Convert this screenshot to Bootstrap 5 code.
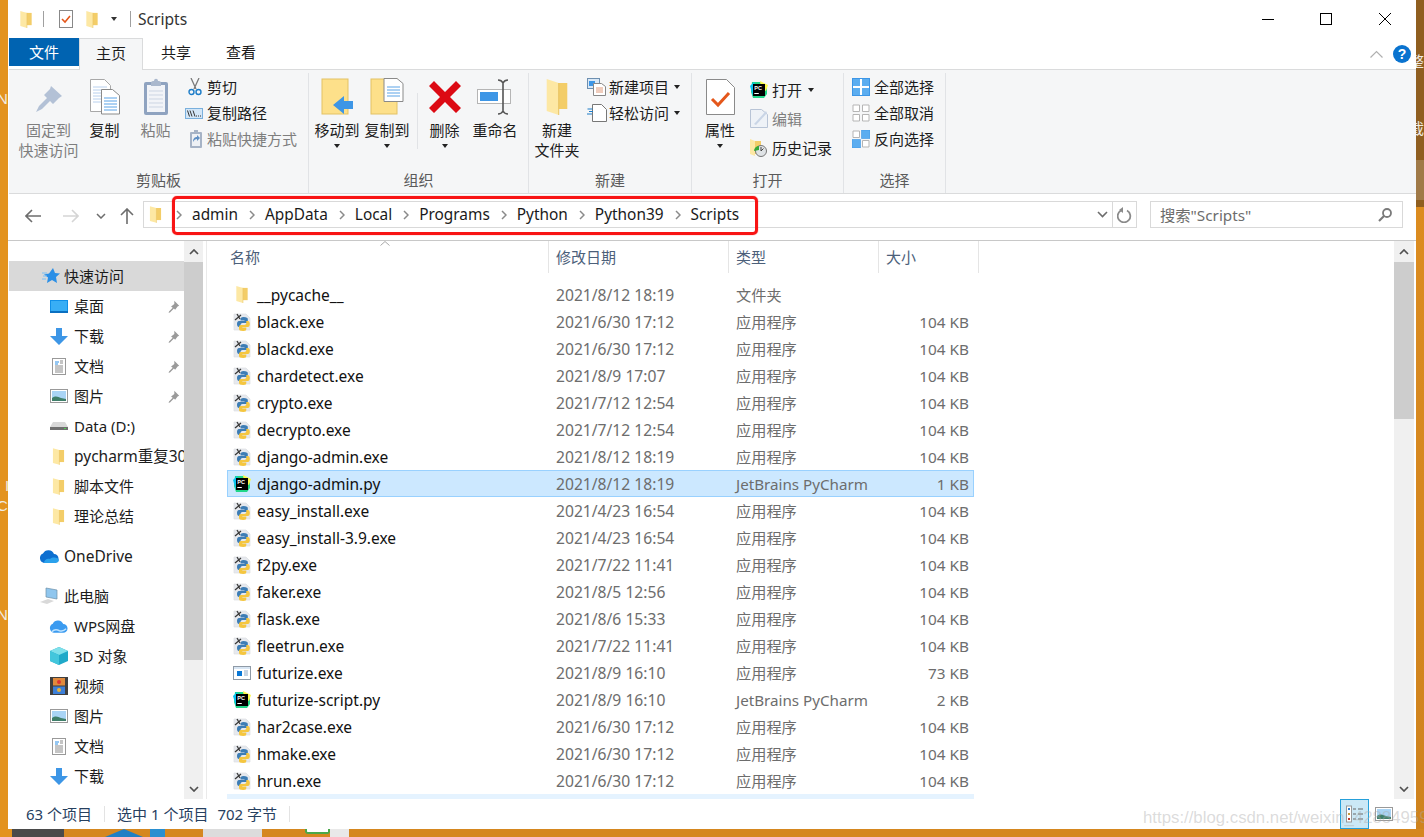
<!DOCTYPE html>
<html lang="zh-CN">
<head>
<meta charset="utf-8">
<title>Scripts</title>
<link rel="stylesheet" href="https://cdn.jsdelivr.net/npm/bootstrap@5.3.0/dist/css/bootstrap.min.css">
<style>
html,body{margin:0;height:837px;overflow:hidden}
body{width:1424px;background:#d5871f;font-family:"Noto Sans","Noto Sans CJK SC",sans-serif;font-size:15px;line-height:20px;color:#1c1c1c}
.ic{display:block;flex:none}
.desk-row{height:829px}
.strip-l{width:8px;background:#e3931f;position:relative;overflow:hidden}
.strip-r{width:8px;position:relative;overflow:hidden;background:linear-gradient(#8f5e20 0,#8f5e20 160px,#a07a48 160px,#a07a48 200px,#8f5e20 200px,#8f5e20 207px,#dc8c20 207px,#cf831e 829px)}
.ghost{position:absolute;color:#f0ece4;font-size:15px;line-height:15px;white-space:nowrap;font-family:"Liberation Sans","Noto Sans CJK SC",sans-serif}
.win{width:1408px;height:829px;background:#fff}
.titlebar{height:38px}
.tsep{width:1px;height:16px;background:#a0a0a0}
.wbtn{width:12px;height:12px}
.ttl{margin-left:7px;color:#333;font-size:15.6px}
.tabrow{height:31px;padding-left:1px}
.tab-file{width:70px;height:28px;background:#0063b1;color:#fff;font-size:15px}
.tab-x{height:31px;font-size:15px;text-align:center;line-height:29px}
.tab-home{width:64px;background:#f5f6f7;border:1px solid #dadbdc;border-bottom:0;margin-bottom:-1px;height:32px;position:relative;z-index:1}
.tab-a{width:66px}
.tab-b{width:64px}
.ribbon{height:125px;background:#f5f6f7;border-top:1px solid #dadbdc;border-bottom:1px solid #dadbdc;margin-left:1px}
.rg{height:120px;border-right:1px solid #e1e3e6;margin-top:3px}
.rg-body{height:97px}
.rg-lab{height:20px;color:#5a5a5a;text-align:center;line-height:20px}
.bigb{text-align:center;flex:none}
.bigi{height:47px}
.dim{color:#7e7e7e}
.caret-d{width:0;height:0;border-left:3.5px solid transparent;border-right:3.5px solid transparent;border-top:4px solid #222}
.smrow{height:26px;white-space:nowrap}
.smrow.tall{height:29px}
.addr{height:46px;padding-top:7px;padding-bottom:12px}
.navarrow{margin-top:3px}
.abox{height:27px;border:1px solid #d9d9d9}
.crumb{color:#1a1a1a;font-size:15.4px;margin-left:10px}
.cchev{margin-left:11px}
.search{height:27px;border:1px solid #d9d9d9;color:#6d6d6d;font-size:15.3px}
.redbox{position:absolute;left:172px;top:196px;width:586px;height:39px;border:3px solid #f81414;border-radius:5px;z-index:3;box-shadow:0 0 1px #f81414}
.body-a{height:559px;border-top:1px solid #c8c8c8}
.navp{width:175px;margin-left:1px;overflow:hidden;padding-top:20px}
.navi{height:30px;white-space:nowrap;overflow:hidden}
.navi.act{background:#d9d9d9}
.lat{font-size:15.5px}
.lv1{padding-left:33px}
.lv2{padding-left:41px}
.gap10{margin-top:10px}
.pin{margin-left:auto;margin-right:4px}
.sb{width:19px;background:#f0f0f0}
.sbb{height:21px}
.thumb{background:#cdcdcd}
.vsep{width:1px;background:#eaeaea;margin-left:3px;margin-right:3px}
.main{width:1184px;overflow:hidden}
.hdr{height:32px;color:#4c607a;margin-bottom:8px}
.hc{padding-left:7px;border-right:1px solid #e5e5e5;height:32px;line-height:32px;position:relative}
.sortc{position:absolute;left:170px;top:0}
.frow{height:27px;margin-left:17px;width:747px;border:1px solid transparent;flex:none;white-space:nowrap}
.frow.sel{background:#cce8ff;border-color:#99d1ff}
.frow.hov{background:#e5f3ff;border-color:#e5f3ff}
.c-n{width:328px;padding-left:5px;gap:6px;color:#111;font-size:15.5px}
.c-d{width:180px;color:#6d6d6d;font-size:15.65px}
.c-t{width:142px;color:#6d6d6d;font-size:15.2px}
.c-s{width:91px;color:#6d6d6d;text-align:right;font-size:15.3px}
.files{height:518px;overflow:hidden}
.status{height:30px;padding-left:18px;color:#27405f;position:relative}
.ssep{width:1px;height:16px;background:#e3e3e3}
.vbtn{width:29px;height:30px;background:#cbe8f6;border:1px solid #26a0da}
.wm{position:absolute;left:1143px;top:808px;z-index:4;color:rgba(170,170,170,.42);font-family:"Liberation Sans",sans-serif;font-size:16.8px;line-height:20px;white-space:nowrap;pointer-events:none}
.desk-b{height:8px}
.db{height:8px;flex:none}
.db-tri{background:#1f7fc4;clip-path:polygon(50% 0,100% 100%,0 100%)}
.db-grn{background:#fff;border:2px solid #4aa84a;border-top:0;border-radius:0 0 3px 3px;height:5px}
</style>
</head>
<body>
<svg width="0" height="0" class="position-absolute">
<defs>
<symbol id="folder" viewBox="0 0 14 18"><path d="M4 2h9v13H4z" fill="#f3cd68"/><path d="M1 0l7 2v16l-7-2z" fill="#fde8a4"/><path d="M8 2v16" stroke="#e9c463" stroke-width=".6"/></symbol>
<symbol id="py" viewBox="0 0 18 18"><path d="M1 1h12l4 4v12H1z" fill="#e6e9ee" stroke="#dcdfe3" stroke-width=".7"/><path d="M2 7L8 2M4 1l3 5" stroke="#3a3a3a" stroke-width="1.300" fill="none"/><g><path d="M10.500 4C8 4 7.500 5 7.500 6v1.500h4V8H6C4.500 8 4 9.500 4 11s.5 3 2 3h1.500v-2c0-1.200 1-2 2-2H13c1 0 1.800-.8 1.800-1.800V6c0-1-1-2-4.300-2z" fill="#3d7db5"/><path transform="rotate(180 10.400 11)" d="M10.500 4C8 4 7.500 5 7.500 6v1.500h4V8H6C4.500 8 4 9.500 4 11s.5 3 2 3h1.500v-2c0-1.200 1-2 2-2H13c1 0 1.800-.8 1.800-1.800V6c0-1-1-2-4.300-2z" fill="#f5c63f"/></g></symbol>
<symbol id="pc" viewBox="0 0 18 18"><path d="M2 1h8l7 4v8l-3 4H3l-2-6z" fill="#21d789"/><path d="M10 0l8 4-2 6-5-3z" fill="#fcf84a"/><path d="M0 5l4-4 3 8-4 6z" fill="#07c3f2"/><rect x="3" y="3" width="12" height="12" fill="#000"/><text x="4.300" y="8.700" font-size="5.500" font-weight="700" fill="#fff" font-family="Liberation Sans,sans-serif">PC</text><rect x="4.300" y="12" width="4.500" height="1" fill="#fff"/></symbol>
<symbol id="exe" viewBox="0 0 18 18"><rect x=".5" y="2.500" width="17" height="13" fill="#fff" stroke="#8f9aa6"/><rect x="1" y="3" width="16" height="2" fill="#d8e6f4"/><rect x="4" y="7" width="5" height="5" fill="#0a78d6"/><path d="M11 7h4M11 9h4M11 11h4" stroke="#8ea8c4"/></symbol>
<symbol id="pin" viewBox="0 0 16 16"><path d="M9 1l6 6-2 1-3 4-1.500-1.500L4 15l-2 1 .5-2 4.500-4.500L5 8l4-3z" fill="#9a9a9a"/></symbol>
<symbol id="pinbig" viewBox="0 0 28 28"><path d="M16 1l11 10-3 2-6 6-3-3-8 8-6 3 3-6 8-8-3-3 6-6z" fill="#b3c1d6"/></symbol>
<symbol id="pages" viewBox="0 0 30 36"><path d="M.5.500h14l6 6v26H.5z" fill="#fff" stroke="#a8a8a8"/><path d="M3 8h14M3 11h14M3 14h14M3 17h14M3 20h14M3 23h14" stroke="#b8d0ee"/><path d="M11.500 10.500h11l7 6v18.500h-18z" fill="#fff" stroke="#8a8a8a"/><path d="M14 19h13M14 22h13M14 25h13M14 28h13M14 31h13" stroke="#5ba3e6"/></symbol>
<symbol id="clip" viewBox="0 0 26 38"><rect x="1" y="4" width="24" height="33" rx="2" fill="#8fa3c0"/><rect x="4" y="7" width="18" height="27" fill="#f2f4f8"/><path d="M6 13h14M6 17h14M6 21h14M6 25h14M6 29h14" stroke="#ccd5e3"/><path d="M8 5c0-2 2-2 3-2 0-3 4-3 4 0 1 0 3 0 3 2v3H8z" fill="#aab8cd"/></symbol>
<symbol id="sciss" viewBox="0 0 14 18"><path d="M3 0l5 11M11 0L6 11" stroke="#7a7a7a" stroke-width="1.300"/><circle cx="3.500" cy="14" r="2.500" fill="none" stroke="#1e7dc8" stroke-width="1.400"/><circle cx="10.500" cy="14" r="2.500" fill="none" stroke="#1e7dc8" stroke-width="1.400"/></symbol>
<symbol id="cpath" viewBox="0 0 18 11"><rect x=".5" y=".5" width="17" height="10" fill="#d3e6f7" stroke="#7ab0dd"/><path d="M2.500 2.500l2 6M5 2.500l2 6M8 2.500l2 6" stroke="#333"/><path d="M11 8h1M13 8h1M15 8h1" stroke="#333"/></symbol>
<symbol id="scut" viewBox="0 0 14 19"><rect x="1" y="2" width="12" height="16" rx="1" fill="#a6b3c6"/><rect x="3" y="4" width="8" height="12" fill="#eef1f5"/><path d="M4 12c0-4 2-5 4-5V5l3 3-3 3V9c-1.500 0-3 1-4 3z" fill="#5f8fc4"/><rect x="5" y="0" width="4" height="3" fill="#a6b3c6"/></symbol>
<symbol id="bfold" viewBox="0 0 32 38"><rect x="1" y="1" width="26" height="35" fill="#fde08a" stroke="#e3c264"/></symbol>
<symbol id="ren" viewBox="0 0 36 36"><rect x=".5" y="10.500" width="33" height="14" fill="#fff" stroke="#b5b5b5"/><rect x="3" y="13" width="18" height="9" fill="#3d96e6"/><path d="M21 1c2 0 4 1 5 3 1-2 3-3 5-3M21 35c2 0 4-1 5-3 1 2 3 3 5 3M26 4v28" stroke="#555" stroke-width="1.600" fill="none"/></symbol>
<symbol id="newitem" viewBox="0 0 20 18"><rect x=".5" y=".5" width="12" height="10" fill="#d9e8f6" stroke="#6d8fb0"/><rect x="2" y="3" width="6" height="5" fill="#3d96e6"/><path d="M6.500 5.500h8l4 3v9h-12z" fill="#fff" stroke="#888"/><path d="M9 10h7M9 12h7M9 14h7" stroke="#e09a7a"/></symbol>
<symbol id="easy" viewBox="0 0 20 18"><path d="M5.500.5h9l5 5v12h-14z" fill="#fff" stroke="#777"/><path d="M.500 5h5M2 7.500h4M0 10h5" stroke="#1e7dc8" stroke-width="1.200"/></symbol>
<symbol id="prop" viewBox="0 0 29 36"><path d="M.5.500h20l8 8v27H.5z" fill="#fff" stroke="#8a8a8a"/><path d="M6 20l6 6 11-12" stroke="#e4571b" stroke-width="3" fill="none"/></symbol>
<symbol id="edit" viewBox="0 0 18 19"><path d="M.5.500h11l6 5v13H.5z" fill="#eef2f7" stroke="#b8c4d6"/><path d="M4 15L16 2l1 2L6 16z" fill="#c9d5e6"/></symbol>
<symbol id="hist" viewBox="0 0 18 18"><path d="M2 2h9v13H2z" fill="#f3cd68"/><path d="M0 0l5 2v15l-5-2z" fill="#fde8a4"/><circle cx="11" cy="12" r="5.500" fill="#dfe3e6" stroke="#777"/><path d="M11 12l2.500-2.500M11 12V8" stroke="#444"/><path d="M4 12a5 5 0 0 1 5-5v4z" fill="#36a838"/></symbol>
<symbol id="gr-all" viewBox="0 0 18 18"><rect x=".5" y=".5" width="17" height="17" fill="#fff" stroke="#3d96e6"/><path d="M1 1h7v7H1zM10 1h7v7h-7zM1 10h7v7H1zM10 10h7v7h-7z" fill="#5badf0"/></symbol>
<symbol id="gr-none" viewBox="0 0 18 18"><path d="M1 1h6.500v6.500H1zM10.500 1H17v6.500h-6.500zM1 10.500h6.500V17H1zM10.500 10.500H17V17h-6.500z" fill="#fff" stroke="#b5b5b5"/></symbol>
<symbol id="gr-inv" viewBox="0 0 18 18"><path d="M1 1h6.500v6.500H1zM10.500 10.500H17V17h-6.500z" fill="#fff" stroke="#b5b5b5"/><path d="M9.500 0H18v8.500H9.500zM0 9.500h8.500V18H0z" fill="#5badf0" stroke="#3d96e6" stroke-width=".6"/></symbol>
<symbol id="chev" viewBox="0 0 6 10"><path d="M1 1l4 4-4 4" fill="none" stroke="#8a8a8a" stroke-width="1.500"/></symbol>
<symbol id="star" viewBox="0 0 18 16"><path d="M11 0l2 5 5 .5-4 3.500 1 6-5-3-5 3 1-5.500-4-3 5-1z" fill="#2b8fe6"/><path d="M0 5h5M1 8h4M0 11h4" stroke="#7cc0f5"/></symbol>
<symbol id="desk" viewBox="0 0 18 13"><rect width="18" height="13" fill="#0f8fe8"/><rect x="1" y="1" width="16" height="10" fill="#38aef5"/><rect y="11" width="18" height="2" fill="#0a6fc0"/></symbol>
<symbol id="down" viewBox="0 0 18 17"><path d="M6 0h6v8h6l-9 9-9-9h6z" fill="#3d96e6"/></symbol>
<symbol id="doc" viewBox="0 0 14 17"><rect x=".5" y=".5" width="13" height="16" fill="#fff" stroke="#999"/><path d="M3 4h4M3 6h3" stroke="#2b8fe6"/><path d="M8 3h3M8 5h3M3 8h8M3 10h8M3 12h8M3 14h8" stroke="#8a8a8a"/></symbol>
<symbol id="pics" viewBox="0 0 18 14"><rect x=".5" y=".5" width="17" height="13" fill="#fff" stroke="#999"/><rect x="2" y="2" width="14" height="10" fill="#a9d4f5"/><path d="M2 9c4-3 6-1 9 0l5 1v2H2z" fill="#3f7f6a"/></symbol>
<symbol id="disk" viewBox="0 0 18 9"><path d="M3 0h12l3 5v3H0V5z" fill="#d8d8d8"/><path d="M0 5h18v3H0z" fill="#6f6f6f"/><rect x="14" y="6" width="2" height="1" fill="#4fd04f"/></symbol>
<symbol id="cloud" viewBox="0 0 20 14"><path d="M5 14a5 5 0 0 1-1-9.500A6 6 0 0 1 15 5a4.500 4.500 0 0 1 0 9z" fill="#0d6fd0"/><path d="M5 14c0-3 3-5 6-4 3-3 9-1 9 1 0 2-2 3-4 3z" fill="#2aa1ec"/></symbol>
<symbol id="pc-m" viewBox="0 0 18 18"><path d="M6 1l11 2v9L6 10z" fill="#8fc6ee" stroke="#6d8fa8" stroke-width=".7"/><path d="M0 15l8-3 6 2-7 3z" fill="#d9d9d9"/></symbol>
<symbol id="wps" viewBox="0 0 20 14"><path d="M5 14a5 5 0 0 1-1-9.500A6 6 0 0 1 15 5a4.500 4.500 0 0 1 0 9z" fill="#3b9bf0"/><path d="M3 13c3-3 6-2 8-1 3 1 5 0 7-2" stroke="#bfe3ff" stroke-width="1.500" fill="none"/></symbol>
<symbol id="cube" viewBox="0 0 18 18"><path d="M9 0l9 4v10l-9 4-9-4V4z" fill="#1fa9c9"/><path d="M9 0l9 4-9 4-9-4z" fill="#7fe0ea"/><path d="M0 4l9 4v10l-9-4z" fill="#43c6dc"/></symbol>
<symbol id="film" viewBox="0 0 18 18"><rect width="18" height="18" fill="#3f3f3f"/><rect x="3" y="1" width="12" height="7.500" fill="#e08a3c"/><rect x="3" y="9.500" width="12" height="7.500" fill="#3c7fd8"/><circle cx="9" cy="5" r="2" fill="#d33"/><circle cx="9" cy="13" r="2" fill="#e8b23c"/></symbol>
</defs>
</svg>

<div class="redbox"></div>
<div class="wm">https://blog.csdn.net/weixin_42884959</div>

<div class="d-flex desk-row">
  <div class="strip-l">
    <span class="ghost" style="left:-3px;top:91px">N</span>
    <span class="ghost" style="left:5px;top:478px">I</span>
    <span class="ghost" style="left:-3px;top:498px">C</span>
    <span class="ghost" style="left:-3px;top:607px">N</span>
  </div>
  <div class="win d-flex flex-column">
    <div class="titlebar d-flex align-items-center">
      <svg class="ic" width="14" height="17" style="margin-left:11px"><use href="#folder"/></svg>
      <span class="tsep" style="margin-left:10px"></span>
      <svg class="ic" width="16" height="18" viewBox="0 0 16 18" style="margin-left:15px"><rect x=".5" y=".5" width="13" height="17" fill="#fff" stroke="#888"/><path d="M3 9l3 3 5-6" stroke="#e4571b" stroke-width="1.600" fill="none"/></svg>
      <svg class="ic" width="14" height="17" style="margin-left:10px"><use href="#folder"/></svg>
      <span class="caret-d" style="margin-left:12px;border-top-color:#333"></span>
      <span class="tsep" style="margin-left:13px"></span>
      <span class="ttl">Scripts</span>
      <div class="ms-auto d-flex align-items-center" style="margin-right:25px;gap:46px">
        <svg class="wbtn" viewBox="0 0 12 12"><path d="M0 6.500h12" stroke="#000"/></svg>
        <svg class="wbtn" style="margin-right:1px" viewBox="0 0 12 12"><rect x=".5" y=".5" width="11" height="11" fill="none" stroke="#000"/></svg>
        <svg class="wbtn" viewBox="0 0 12 12"><path d="M0 0l12 12M12 0L0 12" stroke="#000"/></svg>
      </div>
    </div>
    <div class="tabrow d-flex align-items-start">
      <div class="tab-file d-flex align-items-center justify-content-center">文件</div>
      <div class="tab-x tab-home">主页</div>
      <div class="tab-x tab-a">共享</div>
      <div class="tab-x tab-b">查看</div>
      <div class="ms-auto d-flex align-items-center" style="height:31px;margin-right:5px;gap:10px">
        <svg width="13" height="8" viewBox="0 0 13 8"><path d="M.5 7.500l6-6 6 6" fill="none" stroke="#b0b0b0" stroke-width="1.200"/></svg>
        <svg width="18" height="18" viewBox="0 0 18 18"><circle cx="9" cy="9" r="9" fill="#0a73cf"/><text x="9" y="14" text-anchor="middle" font-size="14" font-weight="700" fill="#fff" font-family="Liberation Sans,sans-serif">?</text></svg>
      </div>
    </div>
    <div class="ribbon d-flex">
      <!-- 剪贴板 -->
      <div class="rg" style="width:300px">
        <div class="rg-body d-flex" style="padding-left:9px">
          <div class="bigb dim" style="width:61px"><div class="bigi d-flex justify-content-center align-items-center"><svg width="28" height="28" style="margin-top:4px"><use href="#pinbig"/></svg></div>固定到<br>快速访问</div>
          <div class="bigb" style="width:51px"><div class="bigi d-flex justify-content-center align-items-center"><svg width="30" height="36"><use href="#pages"/></svg></div>复制</div>
          <div class="bigb dim" style="width:51px"><div class="bigi d-flex justify-content-center align-items-center"><svg width="26" height="38"><use href="#clip"/></svg></div>粘贴</div>
          <div class="ms-1" style="padding-top:1px">
            <div class="smrow d-flex align-items-center"><svg width="20" height="18" class="ic" viewBox="0 0 17 18"><use href="#sciss"/></svg><span style="margin-left:2px">剪切</span></div>
            <div class="smrow d-flex align-items-center"><svg width="18" height="11" class="ic"><use href="#cpath"/></svg><span style="margin-left:4px">复制路径</span></div>
            <div class="smrow d-flex align-items-center dim"><svg width="14" height="19" class="ic ms-1"><use href="#scut"/></svg><span style="margin-left:4px">粘贴快捷方式</span></div>
          </div>
        </div>
        <div class="rg-lab">剪贴板</div>
      </div>
      <!-- 组织 -->
      <div class="rg" style="width:220px">
        <div class="rg-body d-flex" style="padding-left:3px">
          <div class="bigb" style="width:50px"><div class="bigi d-flex justify-content-center align-items-center">
            <svg width="32" height="38" viewBox="0 0 32 38"><use href="#bfold" width="32" height="38"/><path d="M12 27l11-9v5h9v8h-9v5z" fill="#3d96e6"/></svg></div>移动到<div class="d-flex justify-content-center mt-1"><span class="caret-d"></span></div></div>
          <div class="bigb" style="width:50px"><div class="bigi d-flex justify-content-center align-items-center">
            <svg width="34" height="38" viewBox="0 0 34 38"><use href="#bfold" width="32" height="38"/><path d="M14 .5h13l6 5v18H14z" fill="#fff" stroke="#8a8a8a"/><path d="M17 9h13M17 12h13M17 15h13M17 18h13" stroke="#5ba3e6"/></svg></div>复制到<div class="d-flex justify-content-center mt-1"><span class="caret-d"></span></div></div>
          <div style="width:1px;height:56px;background:#e1e3e6;margin:20px 2px 0 5px"></div>
          <div class="bigb" style="width:49px"><div class="bigi d-flex justify-content-center align-items-center">
            <svg width="32" height="32" viewBox="0 0 32 32"><path d="M5 0l11 11L27 0l5 5-11 11 11 11-5 5-11-11L5 32l-5-5 11-11L0 5z" fill="#dc0a14"/></svg></div>删除<div class="d-flex justify-content-center mt-1"><span class="caret-d"></span></div></div>
          <div class="bigb" style="width:52px"><div class="bigi d-flex justify-content-center align-items-center"><svg width="36" height="36"><use href="#ren"/></svg></div>重命名</div>
        </div>
        <div class="rg-lab">组织</div>
      </div>
      <!-- 新建 -->
      <div class="rg" style="width:163px">
        <div class="rg-body d-flex" style="padding-left:3px">
          <div class="bigb" style="width:50px"><div class="bigi d-flex justify-content-center align-items-center"><svg width="24" height="36" viewBox="0 0 14 18" preserveAspectRatio="none"><use href="#folder"/></svg></div>新建<br>文件夹</div>
          <div style="padding-left:5px;padding-top:1px">
            <div class="smrow d-flex align-items-center"><svg width="20" height="18" class="ic"><use href="#newitem"/></svg><span style="margin-left:2px">新建项目</span><span class="caret-d" style="margin-left:5px"></span></div>
            <div class="smrow d-flex align-items-center"><svg width="20" height="18" class="ic"><use href="#easy"/></svg><span style="margin-left:2px">轻松访问</span><span class="caret-d" style="margin-left:5px"></span></div>
          </div>
        </div>
        <div class="rg-lab">新建</div>
      </div>
      <!-- 打开 -->
      <div class="rg" style="width:152px">
        <div class="rg-body d-flex" style="padding-left:3px">
          <div class="bigb" style="width:50px"><div class="bigi d-flex justify-content-center align-items-center"><svg width="29" height="36"><use href="#prop"/></svg></div>属性<div class="d-flex justify-content-center mt-1"><span class="caret-d"></span></div></div>
          <div style="padding-left:5px;padding-top:2px">
            <div class="smrow tall d-flex align-items-center"><svg width="18" height="18" class="ic"><use href="#pc"/></svg><span style="margin-left:4px">打开</span><span class="caret-d" style="margin-left:6px"></span></div>
            <div class="smrow tall d-flex align-items-center dim"><svg width="18" height="19" class="ic"><use href="#edit"/></svg><span style="margin-left:4px">编辑</span></div>
            <div class="smrow tall d-flex align-items-center"><svg width="18" height="18" class="ic"><use href="#hist"/></svg><span style="margin-left:4px">历史记录</span></div>
          </div>
        </div>
        <div class="rg-lab">打开</div>
      </div>
      <!-- 选择 -->
      <div class="rg" style="width:102px">
        <div class="rg-body" style="padding-left:8px;padding-top:1px">
          <div class="smrow d-flex align-items-center"><svg width="18" height="18" class="ic"><use href="#gr-all"/></svg><span style="margin-left:4px">全部选择</span></div>
          <div class="smrow d-flex align-items-center"><svg width="18" height="18" class="ic"><use href="#gr-none"/></svg><span style="margin-left:4px">全部取消</span></div>
          <div class="smrow d-flex align-items-center"><svg width="18" height="18" class="ic"><use href="#gr-inv"/></svg><span style="margin-left:4px">反向选择</span></div>
        </div>
        <div class="rg-lab">选择</div>
      </div>
    </div>
    <!-- 地址栏 -->
    <div class="addr d-flex align-items-center">
      <svg class="ic navarrow" width="16" height="14" viewBox="0 0 16 14" style="margin-left:17px"><path d="M7 1L1 7l6 6M1 7h15" fill="none" stroke="#6d6d6d" stroke-width="1.600"/></svg>
      <svg class="ic navarrow" width="16" height="14" viewBox="0 0 16 14" style="margin-left:22px"><path d="M9 1l6 6-6 6M15 7H0" fill="none" stroke="#d5d5d5" stroke-width="1.600"/></svg>
      <svg class="ic navarrow" width="10" height="6" viewBox="0 0 10 6" style="margin-left:17px"><path d="M1 1l4 4 4-4" fill="none" stroke="#6d6d6d" stroke-width="1.500"/></svg>
      <svg class="ic navarrow" width="14" height="16" viewBox="0 0 14 16" style="margin-left:14px"><path d="M1 7l6-6 6 6M7 1v15" fill="none" stroke="#6d6d6d" stroke-width="1.600"/></svg>
      <div class="abox d-flex align-items-center" style="width:994px;margin-left:9px">
        <svg class="ic" width="13" height="17" style="margin-left:5px"><use href="#folder"/></svg>
        <svg class="ic" width="6" height="10" style="margin-left:14px"><use href="#chev"/></svg>
        <span class="crumb">admin</span>
        <svg class="ic cchev" width="6" height="10"><use href="#chev"/></svg>
        <span class="crumb">AppData</span>
        <svg class="ic cchev" width="6" height="10"><use href="#chev"/></svg>
        <span class="crumb">Local</span>
        <svg class="ic cchev" width="6" height="10"><use href="#chev"/></svg>
        <span class="crumb">Programs</span>
        <svg class="ic cchev" width="6" height="10"><use href="#chev"/></svg>
        <span class="crumb">Python</span>
        <svg class="ic cchev" width="6" height="10"><use href="#chev"/></svg>
        <span class="crumb">Python39</span>
        <svg class="ic cchev" width="6" height="10"><use href="#chev"/></svg>
        <span class="crumb">Scripts</span>
        <svg class="ic ms-auto" width="11" height="7" viewBox="0 0 11 7"><path d="M1 1l4.500 4.500L10 1" fill="none" stroke="#6d6d6d" stroke-width="1.600"/></svg>
        <div style="width:1px;height:25px;background:#d9d9d9;margin-left:4px"></div>
        <svg class="ic" width="15" height="16" viewBox="0 0 15 16" style="margin:0 4px 0 4px"><path d="M4 3.500a6.300 6.300 0 1 0 6 0" fill="none" stroke="#8a8a8a" stroke-width="1.800"/><path d="M6 0v6L2 3z" fill="#8a8a8a"/></svg>
      </div>
      <div class="search d-flex align-items-center" style="width:253px;margin-left:13px;padding-left:9px">搜索"Scripts"
        <svg class="ic ms-auto" width="14" height="14" viewBox="0 0 14 14" style="margin-right:10px"><circle cx="9" cy="5" r="4" fill="none" stroke="#7a7a7a" stroke-width="1.800"/><path d="M6 8l-5 5" stroke="#7a7a7a" stroke-width="2.200"/></svg>
      </div>
    </div>
    <!-- 主体 -->
    <div class="body-a d-flex">
      <div class="navp">
        <div class="navi act lv1 d-flex align-items-center"><svg width="18" height="16" class="ic"><use href="#star"/></svg><span style="margin-left:4px">快速访问</span></div>
        <div class="navi lv2 d-flex align-items-center"><svg width="18" height="13" class="ic"><use href="#desk"/></svg><span style="margin-left:6px">桌面</span><svg width="13" height="13" class="ic pin"><use href="#pin"/></svg></div>
        <div class="navi lv2 d-flex align-items-center"><svg width="18" height="17" class="ic"><use href="#down"/></svg><span style="margin-left:6px">下载</span><svg width="13" height="13" class="ic pin"><use href="#pin"/></svg></div>
        <div class="navi lv2 d-flex align-items-center"><svg width="18" height="17" class="ic" viewBox="-2 0 18 17"><use href="#doc" width="14" height="17"/></svg><span style="margin-left:6px">文档</span><svg width="13" height="13" class="ic pin"><use href="#pin"/></svg></div>
        <div class="navi lv2 d-flex align-items-center"><svg width="18" height="14" class="ic"><use href="#pics"/></svg><span style="margin-left:6px">图片</span><svg width="13" height="13" class="ic pin"><use href="#pin"/></svg></div>
        <div class="navi lv2 d-flex align-items-center"><svg width="18" height="9" class="ic"><use href="#disk"/></svg><span style="margin-left:6px">Data (D:)</span></div>
        <div class="navi lv2 d-flex align-items-center"><svg width="13" height="17" class="ic" style="margin-left:2px"><use href="#folder"/></svg><span class="lat" style="margin-left:9px">pycharm重复30</span></div>
        <div class="navi lv2 d-flex align-items-center"><svg width="13" height="17" class="ic" style="margin-left:2px"><use href="#folder"/></svg><span style="margin-left:9px">脚本文件</span></div>
        <div class="navi lv2 d-flex align-items-center"><svg width="13" height="17" class="ic" style="margin-left:2px"><use href="#folder"/></svg><span style="margin-left:9px">理论总结</span></div>
        <div class="navi lv1 gap10 d-flex align-items-center" style="padding-left:30px"><svg width="20" height="14" class="ic"><use href="#cloud"/></svg><span class="lat" style="margin-left:5px">OneDrive</span></div>
        <div class="navi lv1 gap10 d-flex align-items-center" style="padding-left:30px"><svg width="20" height="18" class="ic"><use href="#pc-m"/></svg><span style="margin-left:5px">此电脑</span></div>
        <div class="navi lv2 d-flex align-items-center" style="padding-left:40px"><svg width="19" height="14" class="ic"><use href="#wps"/></svg><span style="margin-left:6px">WPS网盘</span></div>
        <div class="navi lv2 d-flex align-items-center"><svg width="18" height="18" class="ic"><use href="#cube"/></svg><span style="margin-left:6px">3D 对象</span></div>
        <div class="navi lv2 d-flex align-items-center"><svg width="18" height="18" class="ic"><use href="#film"/></svg><span style="margin-left:6px">视频</span></div>
        <div class="navi lv2 d-flex align-items-center"><svg width="18" height="14" class="ic"><use href="#pics"/></svg><span style="margin-left:6px">图片</span></div>
        <div class="navi lv2 d-flex align-items-center"><svg width="18" height="17" class="ic" viewBox="-2 0 18 17"><use href="#doc" width="14" height="17"/></svg><span style="margin-left:6px">文档</span></div>
        <div class="navi lv2 d-flex align-items-center"><svg width="18" height="17" class="ic"><use href="#down"/></svg><span style="margin-left:6px">下载</span></div>
      </div>
      <div class="sb d-flex flex-column">
        <div class="sbb d-flex align-items-center justify-content-center"><svg width="10" height="6" viewBox="0 0 10 6"><path d="M1 5l4-4 4 4" fill="none" stroke="#505050" stroke-width="1.700"/></svg></div>
        <div class="thumb" style="height:398px"></div>
        <div class="flex-grow-1"></div>
        <div class="sbb d-flex align-items-center justify-content-center"><svg width="10" height="6" viewBox="0 0 10 6"><path d="M1 1l4 4 4-4" fill="none" stroke="#505050" stroke-width="1.700"/></svg></div>
      </div>
      <div class="vsep"></div>
      <div class="main d-flex flex-column">
        <div class="hdr d-flex">
          <div class="hc" style="width:339px;padding-left:20px"><svg class="sortc" width="10" height="5" viewBox="0 0 10 5"><path d="M.5 4.500L5 .5l4.500 4" fill="none" stroke="#a8a8a8"/></svg>名称</div>
          <div class="hc" style="width:180px">修改日期</div>
          <div class="hc" style="width:150px">类型</div>
          <div class="hc" style="width:100px">大小</div>
        </div>
        <div class="files d-flex flex-column">
          <div class="frow d-flex align-items-center"><div class="c-n d-flex align-items-center"><svg width="18" height="17" class="ic" viewBox="-2 0 18 17"><use href="#folder" width="14" height="17"/></svg>__pycache__</div><div class="c-d">2021/8/12 18:19</div><div class="c-t">文件夹</div><div class="c-s"></div></div>
          <div class="frow d-flex align-items-center"><div class="c-n d-flex align-items-center"><svg width="18" height="18" class="ic"><use href="#py"/></svg>black.exe</div><div class="c-d">2021/6/30 17:12</div><div class="c-t">应用程序</div><div class="c-s">104 KB</div></div>
          <div class="frow d-flex align-items-center"><div class="c-n d-flex align-items-center"><svg width="18" height="18" class="ic"><use href="#py"/></svg>blackd.exe</div><div class="c-d">2021/6/30 17:12</div><div class="c-t">应用程序</div><div class="c-s">104 KB</div></div>
          <div class="frow d-flex align-items-center"><div class="c-n d-flex align-items-center"><svg width="18" height="18" class="ic"><use href="#py"/></svg>chardetect.exe</div><div class="c-d">2021/8/9 17:07</div><div class="c-t">应用程序</div><div class="c-s">104 KB</div></div>
          <div class="frow d-flex align-items-center"><div class="c-n d-flex align-items-center"><svg width="18" height="18" class="ic"><use href="#py"/></svg>crypto.exe</div><div class="c-d">2021/7/12 12:54</div><div class="c-t">应用程序</div><div class="c-s">104 KB</div></div>
          <div class="frow d-flex align-items-center"><div class="c-n d-flex align-items-center"><svg width="18" height="18" class="ic"><use href="#py"/></svg>decrypto.exe</div><div class="c-d">2021/7/12 12:54</div><div class="c-t">应用程序</div><div class="c-s">104 KB</div></div>
          <div class="frow d-flex align-items-center"><div class="c-n d-flex align-items-center"><svg width="18" height="18" class="ic"><use href="#py"/></svg>django-admin.exe</div><div class="c-d">2021/8/12 18:19</div><div class="c-t">应用程序</div><div class="c-s">104 KB</div></div>
          <div class="frow sel d-flex align-items-center"><div class="c-n d-flex align-items-center"><svg width="18" height="18" class="ic"><use href="#pc"/></svg>django-admin.py</div><div class="c-d">2021/8/12 18:19</div><div class="c-t">JetBrains PyCharm</div><div class="c-s">1 KB</div></div>
          <div class="frow d-flex align-items-center"><div class="c-n d-flex align-items-center"><svg width="18" height="18" class="ic"><use href="#py"/></svg>easy_install.exe</div><div class="c-d">2021/4/23 16:54</div><div class="c-t">应用程序</div><div class="c-s">104 KB</div></div>
          <div class="frow d-flex align-items-center"><div class="c-n d-flex align-items-center"><svg width="18" height="18" class="ic"><use href="#py"/></svg>easy_install-3.9.exe</div><div class="c-d">2021/4/23 16:54</div><div class="c-t">应用程序</div><div class="c-s">104 KB</div></div>
          <div class="frow d-flex align-items-center"><div class="c-n d-flex align-items-center"><svg width="18" height="18" class="ic"><use href="#py"/></svg>f2py.exe</div><div class="c-d">2021/7/22 11:41</div><div class="c-t">应用程序</div><div class="c-s">104 KB</div></div>
          <div class="frow d-flex align-items-center"><div class="c-n d-flex align-items-center"><svg width="18" height="18" class="ic"><use href="#py"/></svg>faker.exe</div><div class="c-d">2021/8/5 12:56</div><div class="c-t">应用程序</div><div class="c-s">104 KB</div></div>
          <div class="frow d-flex align-items-center"><div class="c-n d-flex align-items-center"><svg width="18" height="18" class="ic"><use href="#py"/></svg>flask.exe</div><div class="c-d">2021/8/6 15:33</div><div class="c-t">应用程序</div><div class="c-s">104 KB</div></div>
          <div class="frow d-flex align-items-center"><div class="c-n d-flex align-items-center"><svg width="18" height="18" class="ic"><use href="#py"/></svg>fleetrun.exe</div><div class="c-d">2021/7/22 11:41</div><div class="c-t">应用程序</div><div class="c-s">104 KB</div></div>
          <div class="frow d-flex align-items-center"><div class="c-n d-flex align-items-center"><svg width="18" height="18" class="ic"><use href="#exe"/></svg>futurize.exe</div><div class="c-d">2021/8/9 16:10</div><div class="c-t">应用程序</div><div class="c-s">73 KB</div></div>
          <div class="frow d-flex align-items-center"><div class="c-n d-flex align-items-center"><svg width="18" height="18" class="ic"><use href="#pc"/></svg>futurize-script.py</div><div class="c-d">2021/8/9 16:10</div><div class="c-t">JetBrains PyCharm</div><div class="c-s">2 KB</div></div>
          <div class="frow d-flex align-items-center"><div class="c-n d-flex align-items-center"><svg width="18" height="18" class="ic"><use href="#py"/></svg>har2case.exe</div><div class="c-d">2021/6/30 17:12</div><div class="c-t">应用程序</div><div class="c-s">104 KB</div></div>
          <div class="frow d-flex align-items-center"><div class="c-n d-flex align-items-center"><svg width="18" height="18" class="ic"><use href="#py"/></svg>hmake.exe</div><div class="c-d">2021/6/30 17:12</div><div class="c-t">应用程序</div><div class="c-s">104 KB</div></div>
          <div class="frow d-flex align-items-center"><div class="c-n d-flex align-items-center"><svg width="18" height="18" class="ic"><use href="#py"/></svg>hrun.exe</div><div class="c-d">2021/6/30 17:12</div><div class="c-t">应用程序</div><div class="c-s">104 KB</div></div>
          <div class="frow hov"></div>
        </div>
      </div>
      <div class="sb d-flex flex-column" style="width:20px">
        <div class="sbb d-flex align-items-center justify-content-center"><svg width="10" height="6" viewBox="0 0 10 6"><path d="M1 5l4-4 4 4" fill="none" stroke="#505050" stroke-width="1.700"/></svg></div>
        <div class="thumb" style="height:157px"></div>
        <div class="flex-grow-1"></div>
        <div class="sbb d-flex align-items-center justify-content-center"><svg width="10" height="6" viewBox="0 0 10 6"><path d="M1 1l4 4 4-4" fill="none" stroke="#505050" stroke-width="1.700"/></svg></div>
      </div>
    </div>
    <!-- 状态栏 -->
    <div class="status d-flex align-items-center">
      <span>63 个项目</span><span class="ssep" style="margin-left:12px"></span>
      <span style="margin-left:12px">选中 1 个项目</span><span style="margin-left:9px">702 字节</span><span class="ssep" style="margin-left:12px"></span>
      <div class="ms-auto d-flex align-items-start" style="margin-right:18px;height:30px">
        <div class="vbtn d-flex align-items-center justify-content-center"><svg width="18" height="18" viewBox="0 0 18 18"><rect x="0.500" y="1" width="5" height="16" fill="#fff" stroke="#999"/><rect x="2" y="3" width="2" height="2" fill="#2b7fd0"/><rect x="2" y="8" width="2" height="2" fill="#c79a3c"/><rect x="2" y="13" width="2" height="2" fill="#c0392b"/><path d="M7 4h3M12 4h5M7 9h3M12 9h5M7 14h3M12 14h5" stroke="#666"/></svg></div>
        <div class="d-flex align-items-center justify-content-center" style="width:29px;height:29px"><svg width="18" height="14"><use href="#pics"/></svg></div>
      </div>
    </div>
  </div>
  <div class="strip-r">
    <span class="ghost" style="left:-7px;top:54px">整</span>
    <span class="ghost" style="left:-7px;top:121px">截</span>
  </div>
</div>
<div class="desk-b d-flex">
  <div class="db" style="width:12px;background:#e3931f"></div>
  <div class="db" style="width:52px;background:#4a4a4a"></div>
  <div class="db" style="width:41px"></div>
  <div class="db db-tri" style="width:38px"></div>
  <div class="db" style="width:7px"></div>
  <div class="db" style="width:15px;background:#2a8fd0"></div>
  <div class="db" style="width:38px"></div>
  <div class="db" style="width:59px;background:#dcdcdc"></div>
  <div class="db" style="width:43px"></div>
  <div class="db db-grn" style="width:25px"></div>
  <div class="db" style="width:19px;background:#e9e9e9"></div>
</div>
</body>
</html>
